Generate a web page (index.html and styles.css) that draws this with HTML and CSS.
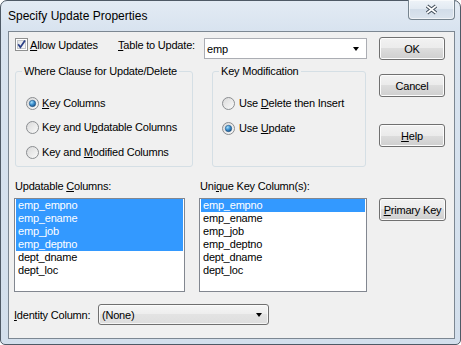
FILE: index.html
```html
<!DOCTYPE html>
<html lang="en">
<head>
    <meta charset="UTF-8">
    <meta name="viewport" content="width=device-width, initial-scale=1.0">
    <title>Specify Update Properties</title>
    <link rel="stylesheet" href="styles.css">
</head>
<body>
    <svg class="defs" aria-hidden="true">
        <defs>
            <linearGradient id="radioFill" x1="0" y1="0" x2="1" y2="1">
                <stop offset="0" stop-color="#d8d8d8"/>
                <stop offset="1" stop-color="#fbfbfb"/>
            </linearGradient>
            <radialGradient id="radioDot" cx="0.35" cy="0.3" r="0.8">
                <stop offset="0" stop-color="#a9e2fd"/>
                <stop offset="0.5" stop-color="#3b8fcf"/>
                <stop offset="1" stop-color="#16497a"/>
            </radialGradient>
            <linearGradient id="checkFill" x1="0" y1="0" x2="1" y2="1">
                <stop offset="0" stop-color="#dfe2e5"/>
                <stop offset="1" stop-color="#fbfbfb"/>
            </linearGradient>
        </defs>
    </svg>

    <div class="window">
        <div class="titlebar">
            <span class="title">Specify Update Properties</span>
            <div class="close">
                <svg width="15" height="11" viewBox="0 0 15 11">
                    <path d="M3 2 L12 9 M12 2 L3 9" stroke="#3f4b58" stroke-width="3.6" fill="none"/>
                    <path d="M3 2 L12 9 M12 2 L3 9" stroke="#ffffff" stroke-width="1.6" fill="none"/>
                </svg>
            </div>
        </div>

        <div class="client">
            <div class="main">
                <div class="row-top">
                    <div class="check">
                        <svg class="checkbox" width="13" height="13" viewBox="0 0 13 13">
                            <rect x="0.5" y="0.5" width="12" height="12" fill="#fff" stroke="#8e8f8f"/>
                            <rect x="2.5" y="2.5" width="8" height="8" fill="url(#checkFill)" stroke="#c4c7cb"/>
                            <path d="M3.2 6.2 L5.4 9.2 L10 2.6" stroke="#2a3f86" stroke-width="1.7" fill="none"/>
                        </svg>
                        <span class="text"><u>A</u>llow Updates</span>
                    </div>
                    <span class="table-label"><u>T</u>able to Update:</span>
                    <div class="combo edit">
                        <span>emp</span>
                        <span class="arrow"></span>
                    </div>
                </div>

                <div class="groups">
                    <fieldset class="group where">
                        <legend>Where Clause for Update/Delete</legend>
                        <div class="radios">
                            <div class="radio">
                                <svg width="13" height="13" viewBox="0 0 13 13">
                                    <circle cx="6.5" cy="6.5" r="6" fill="url(#radioFill)" stroke="#8a8d90"/>
                                    <circle cx="6.5" cy="6.5" r="3.2" fill="url(#radioDot)" stroke="#1d4f7e" stroke-width="0.6"/>
                                </svg>
                                <span><u>K</u>ey Columns</span>
                            </div>
                            <div class="radio">
                                <svg width="13" height="13" viewBox="0 0 13 13">
                                    <circle cx="6.5" cy="6.5" r="6" fill="url(#radioFill)" stroke="#8a8d90"/>
                                </svg>
                                <span>Key and U<u>p</u>datable Columns</span>
                            </div>
                            <div class="radio">
                                <svg width="13" height="13" viewBox="0 0 13 13">
                                    <circle cx="6.5" cy="6.5" r="6" fill="url(#radioFill)" stroke="#8a8d90"/>
                                </svg>
                                <span>Key and <u>M</u>odified Columns</span>
                            </div>
                        </div>
                    </fieldset>

                    <fieldset class="group keymod">
                        <legend>Key Modification</legend>
                        <div class="radios">
                            <div class="radio">
                                <svg width="13" height="13" viewBox="0 0 13 13">
                                    <circle cx="6.5" cy="6.5" r="6" fill="url(#radioFill)" stroke="#8a8d90"/>
                                </svg>
                                <span>Use <u>D</u>elete then Insert</span>
                            </div>
                            <div class="radio">
                                <svg width="13" height="13" viewBox="0 0 13 13">
                                    <circle cx="6.5" cy="6.5" r="6" fill="url(#radioFill)" stroke="#8a8d90"/>
                                    <circle cx="6.5" cy="6.5" r="3.2" fill="url(#radioDot)" stroke="#1d4f7e" stroke-width="0.6"/>
                                </svg>
                                <span>Use <u>U</u>pdate</span>
                            </div>
                        </div>
                    </fieldset>
                </div>

                <div class="lists">
                    <div class="list-col updatable">
                        <div class="list-label">Updatable <u>C</u>olumns:</div>
                        <ul class="listbox">
                            <li class="selected">emp_empno</li>
                            <li class="selected">emp_ename</li>
                            <li class="selected">emp_job</li>
                            <li class="selected">emp_deptno</li>
                            <li>dept_dname</li>
                            <li>dept_loc</li>
                        </ul>
                    </div>
                    <div class="list-col unique">
                        <div class="list-label">Uni<u>q</u>ue Key Column(s):</div>
                        <ul class="listbox">
                            <li class="selected">emp_empno</li>
                            <li>emp_ename</li>
                            <li>emp_job</li>
                            <li>emp_deptno</li>
                            <li>dept_dname</li>
                            <li>dept_loc</li>
                        </ul>
                    </div>
                </div>

                <div class="identity">
                    <span class="identity-label"><u>I</u>dentity Column:</span>
                    <div class="combo droplist">
                        <span>(None)</span>
                        <span class="arrow"></span>
                    </div>
                </div>
            </div>

            <div class="buttons">
                <button class="btn ok">OK</button>
                <button class="btn cancel">Cancel</button>
                <button class="btn help"><u>H</u>elp</button>
                <button class="btn primary"><u>P</u>rimary Key</button>
            </div>
        </div>
    </div>
</body>
</html>
```

FILE: styles.css
```css
body {
    margin: 0;
    background: #ffffff;
    font-family: "Liberation Sans", Arial, sans-serif;
    font-size: 11px;
    letter-spacing: -0.2px;
    color: #000;
}
.defs {
    position: absolute;
    width: 0;
    height: 0;
}
.window {
    width: 461px;
    height: 345px;
    box-sizing: border-box;
    border: 1px solid #4f5a66;
    border-radius: 7px 7px 5px 5px;
    background: linear-gradient(to bottom, #e3ebf4 0, #d8e3ef 30px, #d3dfec 100%);
    padding: 0 5px 5px 7px;
    display: flex;
    flex-direction: column;
}
.titlebar {
    height: 30px;
    display: flex;
    align-items: flex-start;
    justify-content: space-between;
}
.title {
    font-size: 12px;
    letter-spacing: 0;
    line-height: 14px;
    margin-top: 8px;
}
.close {
    width: 47px;
    height: 20px;
    margin-top: -1px;
    box-sizing: border-box;
    border: 1px solid #76848f;
    border-top: none;
    border-radius: 0 0 4px 4px;
    background: linear-gradient(to bottom, #eef3f8 0, #e1e9f2 50%, #d2dde9 50%, #dbe4ee 100%);
    box-shadow: inset 0 0 0 1px rgba(255, 255, 255, 0.6);
    display: flex;
    align-items: center;
    justify-content: center;
}
.client {
    flex: 1;
    box-sizing: border-box;
    border: 1px solid #7c8792;
    background: #f0f0f0;
    display: flex;
    padding: 5px 0 0 5px;
}
.main {
    width: 353px;
    display: flex;
    flex-direction: column;
}
.row-top {
    margin-top: 1px;
    height: 21px;
    display: flex;
}
.check {
    flex: 0 0 103px;
    margin-left: 1px;
    display: flex;
    align-items: flex-start;
}
.check .text {
    margin-left: 2px;
    margin-top: 1px;
    line-height: 13px;
}
.table-label {
    flex: 0 0 86px;
    margin-top: 1px;
    line-height: 13px;
}
.combo {
    box-sizing: border-box;
    height: 21px;
    display: flex;
    align-items: center;
    justify-content: space-between;
}
.combo.edit {
    flex: 1;
    background: #ffffff;
    border: 1px solid #abadb3;
    padding: 0 7px 0 2px;
}
.arrow {
    width: 0;
    height: 0;
    border-left: 3.5px solid transparent;
    border-right: 3.5px solid transparent;
    border-top: 4px solid #000;
}
.groups {
    display: flex;
    margin-top: 6px;
}
.group {
    margin: 0;
    padding: 0;
    min-width: 0;
    box-sizing: border-box;
    height: 102px;
    border: 1px solid #d5dfe5;
    border-radius: 3px;
}
.group legend {
    margin-left: 6px;
    padding: 0 2px;
    line-height: 13px;
}
.where {
    width: 178px;
    margin-left: 1px;
}
.keymod {
    width: 154px;
    margin-left: 19px;
}
.radios {
    padding-top: 13px;
}
.where .radios {
    padding-left: 10px;
}
.keymod .radios {
    padding-left: 9px;
}
.radio {
    height: 24px;
    display: flex;
    align-items: center;
    gap: 3px;
}
.radio:last-child {
    height: 26px;
}
.keymod .radio {
    gap: 4px;
}
.lists {
    display: flex;
    margin-top: 13px;
}
.list-col {
    display: flex;
    flex-direction: column;
}
.updatable {
    width: 171px;
}
.unique {
    width: 168px;
    margin-left: 14px;
}
.list-label {
    line-height: 13px;
    margin-left: 1px;
    margin-bottom: 5px;
}
.listbox {
    list-style: none;
    margin: 0;
    padding: 0 1px;
    height: 94px;
    box-sizing: border-box;
    border: 1px solid #828790;
    background: #ffffff;
}
.listbox li {
    height: 13px;
    line-height: 13px;
    padding-left: 2px;
}
.listbox li.selected {
    background: #3399ff;
    color: #ffffff;
}
.identity {
    display: flex;
    align-items: center;
    margin-top: 12px;
}
.identity-label {
    width: 84px;
}
.combo.droplist {
    width: 171px;
    border: 1px solid #707070;
    border-radius: 3px;
    background: linear-gradient(to bottom, #f6f6f6 0, #ededed 50%, #e3e3e3 50%, #dedede 100%);
    box-shadow: inset 0 0 0 1px rgba(255, 255, 255, 0.7);
    padding: 0 6px 0 3px;
}
.buttons {
    margin-left: 12px;
    width: 66px;
    display: flex;
    flex-direction: column;
}
.btn {
    height: 23px;
    padding: 0;
    font-family: inherit;
    font-size: 11px;
    letter-spacing: -0.2px;
    color: #000;
    border: 1px solid #707070;
    border-radius: 3px;
    background: linear-gradient(to bottom, #f2f2f2 0, #ebebeb 50%, #dddddd 50%, #cfcfcf 100%);
    box-shadow: inset 0 0 0 1px #fcfcfc;
}
.cancel {
    margin-top: 14px;
}
.help {
    margin-top: 27px;
}
.primary {
    margin-top: 51px;
    width: 67px;
}
```
